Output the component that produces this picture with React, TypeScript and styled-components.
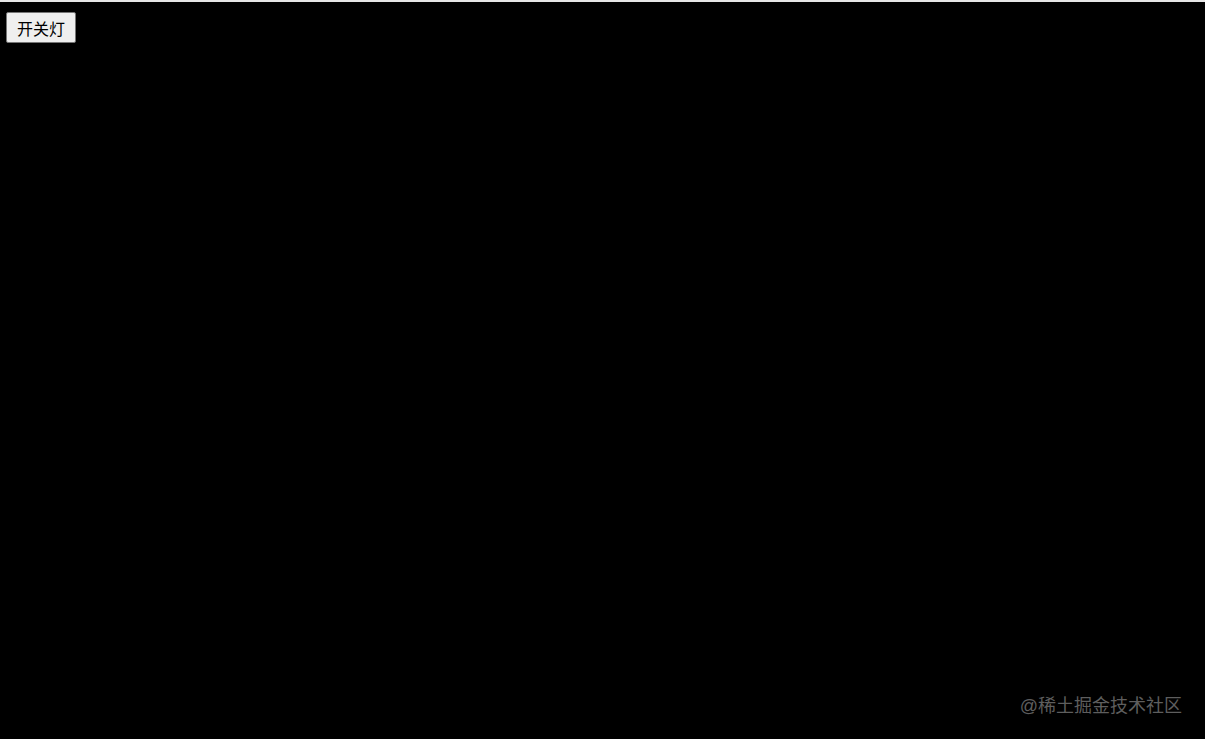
import styled, { createGlobalStyle } from "styled-components";
import { useState } from "react";

const GlobalStyle = createGlobalStyle`
    html, body {
        margin: 0;
        padding: 0;
        height: 100%;
    }
    body {
        font-family: "Liberation Sans", "Noto Sans CJK SC", sans-serif;
    }
    #root {
        height: 100%;
    }
`;

const Page = styled.div<{ $on: boolean }>`
    position: relative;
    height: 100vh;
    box-sizing: border-box;
    border-top: 2px solid #e6e6e6;
    background-color: ${props => (props.$on ? "#ffffff" : "#000000")};
    padding: 10px 6px;
`;

const Toggle = styled.button`
    width: 70px;
    height: 31px;
    padding: 0;
    font-family: "Liberation Sans", "Noto Sans CJK SC", sans-serif;
    font-size: 16px;
    color: #000;
    background-color: #efefef;
    border: 1px solid #767676;
    border-radius: 2px;
    cursor: pointer;
`;

// 水印，压在页面右下角
const Watermark = styled.div`
    position: absolute;
    right: 23px;
    bottom: 22px;
    font-family: "Liberation Sans", "Noto Sans CJK SC", sans-serif;
    font-size: 18px;
    color: #5e5e5e;
    pointer-events: none;
`;

function App()
{
    const [on, setOn] = useState(false);

    return (
        <>
            <GlobalStyle />
            <Page $on={on}>
                <Toggle onClick={() => setOn(!on)}>开关灯</Toggle>
                <Watermark>@稀土掘金技术社区</Watermark>
            </Page>
        </>
    );
}

export default App;
